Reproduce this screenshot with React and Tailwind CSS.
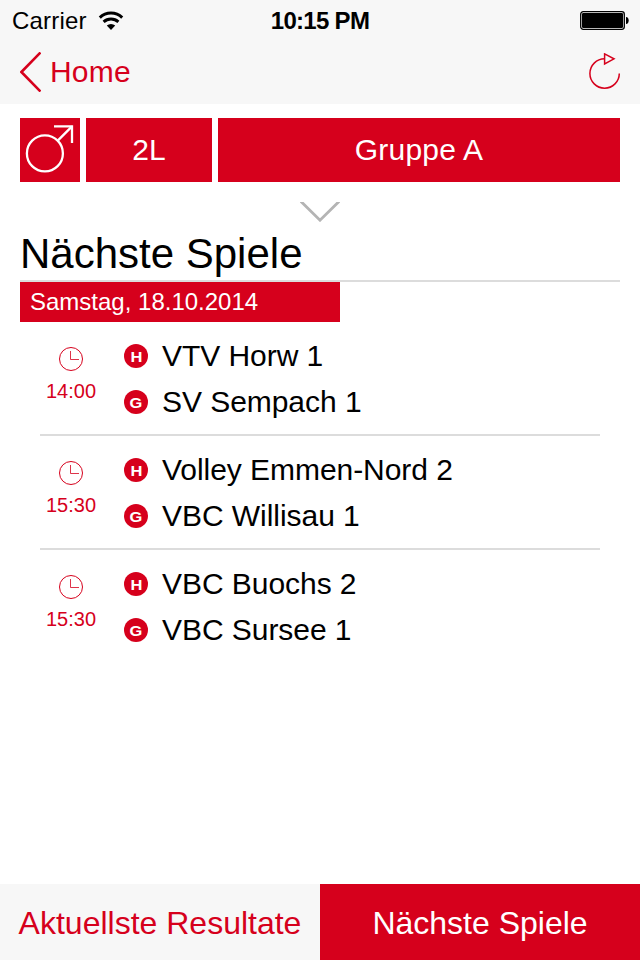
const games = [
  { time: "14:00", home: "VTV Horw 1", guest: "SV Sempach 1" },
  { time: "15:30", home: "Volley Emmen-Nord 2", guest: "VBC Willisau 1" },
  { time: "15:30", home: "VBC Buochs 2", guest: "VBC Sursee 1" },
];

const StatusBar = () => (
  <div className="grid h-10 grid-cols-3 items-center pt-px text-2xl leading-none">
    <div className="flex items-center gap-[11px] pl-3">
      <span className="tracking-[0.2px]">Carrier</span>
      <svg width="26" height="20" viewBox="0 0 26 20" fill="none" stroke="black">
        <path d="M1.8 6.6A16.2 16.2 0 0 1 24.2 6.6" strokeWidth="3" />
        <path d="M5.6 10.9A10.8 10.8 0 0 1 20.4 10.9" strokeWidth="2.9" />
        <path d="M13 19L8.8 14.6A6 6 0 0 1 17.2 14.6Z" fill="black" stroke="none" />
      </svg>
    </div>
    <span className="text-center font-bold tracking-[-0.7px] whitespace-nowrap">10:15 PM</span>
    <div className="flex justify-end pr-[11px]">
      <svg width="49" height="20" viewBox="0 0 49 20">
        <rect x="0.7" y="0.7" width="43.6" height="17.6" rx="2.5" fill="none" stroke="black" strokeWidth="1.3" />
        <rect x="2" y="2" width="41" height="15" rx="1.2" />
        <path d="M46 6C49.6 6 49.6 13 46 13Z" />
      </svg>
    </div>
  </div>
);

const NavBar = () => (
  <div className="flex h-16 items-center justify-between pr-[19px] pl-5 text-[#d6001c]">
    <button className="flex items-center gap-[9px] text-[30px] leading-none tracking-[0.2px]">
      <svg width="21" height="40" viewBox="0 0 21 40" fill="none" stroke="currentColor" strokeWidth="2.6">
        <path d="M20.5 0.5L1.4 20L20.5 39.5" />
      </svg>
      Home
    </button>
    <button aria-label="Aktualisieren">
      <svg width="33" height="38" viewBox="0 0 33 38" fill="none" stroke="currentColor" strokeWidth="1.5">
        <path d="M31.3 20.5A14.7 14.7 0 1 1 16.6 5.8" />
        <path d="M16.6 0.9V10.9L26 5.8Z" />
      </svg>
    </button>
  </div>
);

const FilterBar = () => (
  <div className="flex h-16 gap-1.5 text-[30px] text-white">
    <button className="w-15 bg-[#d6001c]" aria-label="Herren">
      <svg width="60" height="64" viewBox="0 0 60 64" fill="none" stroke="currentColor" strokeWidth="2.3">
        <circle cx="24.9" cy="35.4" r="18" />
        <path d="M38 22.4L52 8.4" />
        <path d="M34 8.4H52V25" />
      </svg>
    </button>
    <button className="w-[126px] bg-[#d6001c] pb-0.5">2L</button>
    <button className="flex-1 bg-[#d6001c] pb-0.5 tracking-[0.2px]">Gruppe A</button>
  </div>
);

const Team = ({ badge, name }) => (
  <div className="flex h-[46px] items-center gap-3.5">
    <span className="flex size-6 items-center justify-center rounded-full bg-[#d6001c] text-[15px] leading-none font-bold text-white">
      <span className="scale-x-110">{badge}</span>
    </span>
    <span className="text-[30px] leading-none tracking-[-0.05px] whitespace-nowrap">{name}</span>
  </div>
);

const Game = ({ game }) => (
  <li className="flex h-[114px] border-b-2 border-[#dcdcdc] last:border-b-0">
    <div className="flex w-[62px] flex-col items-center pt-[25px] text-[#d6001c]">
      <svg width="24" height="24" viewBox="0 0 24 24" fill="none" stroke="currentColor">
        <circle cx="12" cy="12" r="11.5" />
        <path d="M11.5 4V12.5H20" strokeWidth="0.8" />
      </svg>
      <span className="mt-2.5 text-xl leading-5">{game.time}</span>
    </div>
    <div className="ml-[22px] pt-[11px]">
      <Team badge="H" name={game.home} />
      <Team badge="G" name={game.guest} />
    </div>
  </li>
);

const App = () => {
  return (
    <div className="flex h-[960px] w-[640px] flex-col bg-white font-['Liberation_Sans',Arial,sans-serif] text-black">
      <header className="bg-[#f7f7f7]">
        <StatusBar />
        <NavBar />
      </header>

      <main className="flex-1 px-5 pt-3.5">
        <FilterBar />
        <div className="flex h-10 justify-center pt-5">
          <svg width="40" height="20" viewBox="0 0 40 20" fill="none" stroke="#b4b4b4" strokeWidth="2.8">
            <path d="M0.5 -1L20 18.2L39.5 -1" />
          </svg>
        </div>
        <h1 className="h-[60px] border-b-2 border-[#dcdcdc] pt-[3px] text-[42px] leading-[57px]">
          Nächste Spiele
        </h1>
        <h2 className="h-10 w-80 bg-[#d6001c] pl-2.5 text-2xl leading-10 text-white">Samstag, 18.10.2014</h2>
        <ul className="mx-5">
          {games.map((game) => (
            <Game key={game.home} game={game} />
          ))}
        </ul>
      </main>

      <footer className="flex h-[76px] text-[32px]">
        <button className="w-1/2 bg-[#f7f7f7] pt-0.5 text-[#d6001c]">Aktuellste Resultate</button>
        <button className="w-1/2 bg-[#d6001c] pt-0.5 text-white">Nächste Spiele</button>
      </footer>
    </div>
  );
};

export default App;
